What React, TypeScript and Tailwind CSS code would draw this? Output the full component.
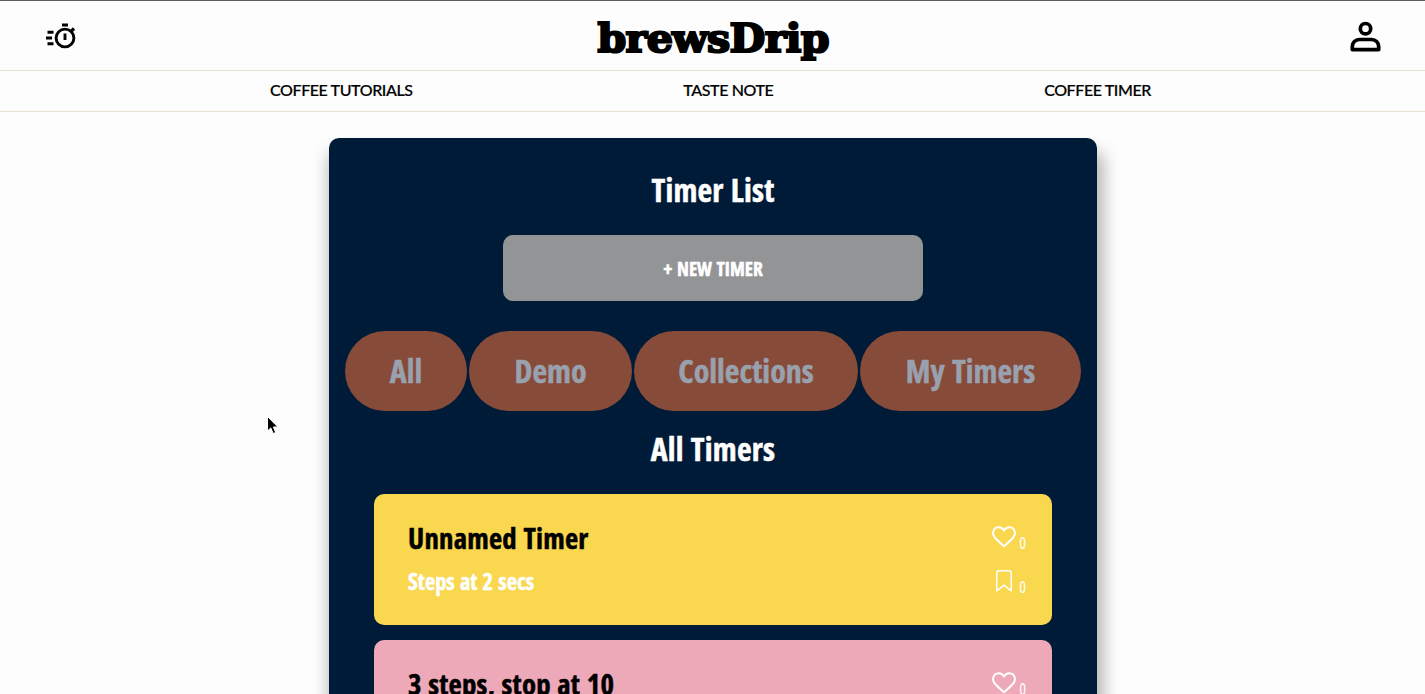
const cond = "font-['Open_Sans'] font-bold [font-stretch:75%] [-webkit-text-stroke:0.500px_currentColor]";
const spaced = "[word-spacing:1.2px] tracking-[0.2px]";

function TimerIcon() {
  return (
    <svg className="h-[30px] w-[32px]" viewBox="0 0 32 30" fill="none" stroke="#000">
      <circle cx="20" cy="17" r="8.900" strokeWidth="2.900" />
      <path d="M17 4h6M20 12.500v6.500M2.500 11.200h6M1 17h6M2.500 22.800h6" strokeWidth="2.900" />
      <path d="M25.500 11l3.500-3.500" strokeWidth="3.200" />
    </svg>
  );
}

function UserIcon() {
  return (
    <svg className="h-[32px] w-[32px]" viewBox="0 0 32 32" fill="none" stroke="#000" strokeWidth="3.700">
      <circle cx="15.5" cy="7.700" r="5.200" />
      <path d="M2.300 28.600v-3.100a7 7 0 0 1 7-7h12.400a7 7 0 0 1 7 7v3.100z" strokeLinejoin="round" />
    </svg>
  );
}

function Heart() {
  return (
    <svg className="h-[22px] w-[24px]" viewBox="0 0 24 22" fill="none" stroke="#fff" strokeWidth="2" strokeLinejoin="round">
      <path d="M12 20.4C9.5 18 5.5 14.500 3.200 12C1.500 10 .9 8.600 1 7C1.200 3.600 3.600 1.200 6.700 1.200C9 1.200 10.900 2.400 12 4.500C13.100 2.400 15 1.200 17.300 1.200C20.400 1.200 22.800 3.600 23 7C23.100 8.600 22.500 10 20.800 12C18.500 14.500 14.500 18 12 20.400z" />
    </svg>
  );
}

function Bookmark() {
  return (
    <svg className="h-[22px] w-[16px]" viewBox="0 0 16 22" fill="none" stroke="#fff" strokeWidth="1.500" strokeLinejoin="round">
      <path d="M.8 2.600A1.900 1.900 0 0 1 2.700.7h10.600a1.900 1.900 0 0 1 1.900 1.900V20.800L8 15.200L.8 20.800z" />
    </svg>
  );
}

const zero = "font-['Open_Sans'] text-[16px] font-normal leading-[18px] text-white [font-stretch:75%]";

function Card({ title, detail, color }: { title: string; detail: string; color: string }) {
  return (
    <article className={`flex h-[131px] w-[678px] shrink-0 justify-between rounded-[10px] pl-[34px] pr-[26px] ${color}`}>
      <div className="pt-[24px]">
        <h3 className={`${cond} ${spaced} whitespace-nowrap text-[28.800px] leading-[40px] text-black`}>{title}</h3>
        <p className={`${cond} mt-[7px] whitespace-nowrap text-[22.400px] leading-[34px] text-white [word-spacing:1.2px]`}>{detail}</p>
      </div>
      <div className="flex w-[34px] flex-col pt-[32px]">
        <div className="flex h-[44px] items-start justify-between">
          <Heart />
          <span className={`${zero} mt-[8px]`}>0</span>
        </div>
        <div className="flex items-start justify-between pl-[4px]">
          <Bookmark />
          <span className={`${zero} mt-[8px]`}>0</span>
        </div>
      </div>
    </article>
  );
}

const pill = `${cond} flex h-[80px] items-center justify-center rounded-full bg-[#874b39] text-[32px] text-[#99a1af] [word-spacing:1.5px]`;
const nav = "font-[Lato] text-[16px] font-medium leading-[38px] tracking-[-0.400px] text-black whitespace-nowrap [-webkit-text-stroke:0.200px_#000]";

export default function App() {
  return (
    <div className="relative h-[694px] w-[1425px] overflow-hidden bg-[#fdfdfd]">
      <header className="flex h-[71px] items-start justify-between border-b border-t border-b-[#e7dfd2] border-t-[#5b5b5b] pl-[45px] pr-[43px]">
        <div className="w-[60px] pt-[20px]"><TimerIcon /></div>
        <h1 className="origin-center scale-x-[1.070] whitespace-nowrap pt-[12px] font-['DejaVu_Serif'] text-[38.500px] font-bold leading-[52px] tracking-[-0.600px] text-black [-webkit-text-stroke:2.200px_#000] [stroke-linejoin:round]">brewsDrip</h1>
        <div className="flex w-[60px] justify-end pt-[20px]"><UserIcon /></div>
      </header>
      <nav className="flex h-[41px] justify-between border-b border-[#e7dfd2] pl-[270px] pr-[274px]">
        <a className={nav}>COFFEE TUTORIALS</a>
        <a className={nav}>TASTE NOTE</a>
        <a className={nav}>COFFEE TIMER</a>
      </nav>
      <main className="ml-[329px] mt-[26px] flex h-[700px] w-[768px] flex-col items-center rounded-[10px] bg-[#001b38] shadow-[3px_16px_16px_4px_rgba(0,0,0,0.280)]">
        <h2 className={`${cond} ${spaced} mt-[28px] text-[32px] leading-[48px] text-white`}>Timer List</h2>
        <button className={`${cond} mt-[21px] h-[66px] w-[420px] shrink-0 rounded-[10px] bg-[#939495] pt-[2px] text-[19.200px] text-white [word-spacing:1.2px]`}>+ NEW TIMER</button>
        <div className="mt-[30px] flex w-[736px] shrink-0 gap-[2px]">
          <button className={`${pill} w-[122px]`}>All</button>
          <button className={`${pill} w-[163px]`}>Demo</button>
          <button className={`${pill} w-[224px]`}>Collections</button>
          <button className={`${pill} w-[221px]`}>My Timers</button>
        </div>
        <h2 className={`${cond} ${spaced} mt-[14px] text-[32px] leading-[48px] text-white`}>All Timers</h2>
        <div className="mt-[21px] flex flex-col gap-[15px]">
          <Card title="Unnamed Timer" detail="Steps at 2 secs" color="bg-[#f9d74f]" />
          <Card title="3 steps, stop at 10" detail="Steps at 3 secs" color="bg-[#eda9b8]" />
        </div>
      </main>
      <svg className="absolute left-[266px] top-[415px] h-[20px] w-[13px]" viewBox="0 0 13 20">
        <path d="M1.500 1.500v14.500l3.300-3.100 2.400 5.600 2.500-1.100-2.400-5.400h4.500z" fill="#000" stroke="#fff" strokeWidth="1" />
      </svg>
    </div>
  );
}
